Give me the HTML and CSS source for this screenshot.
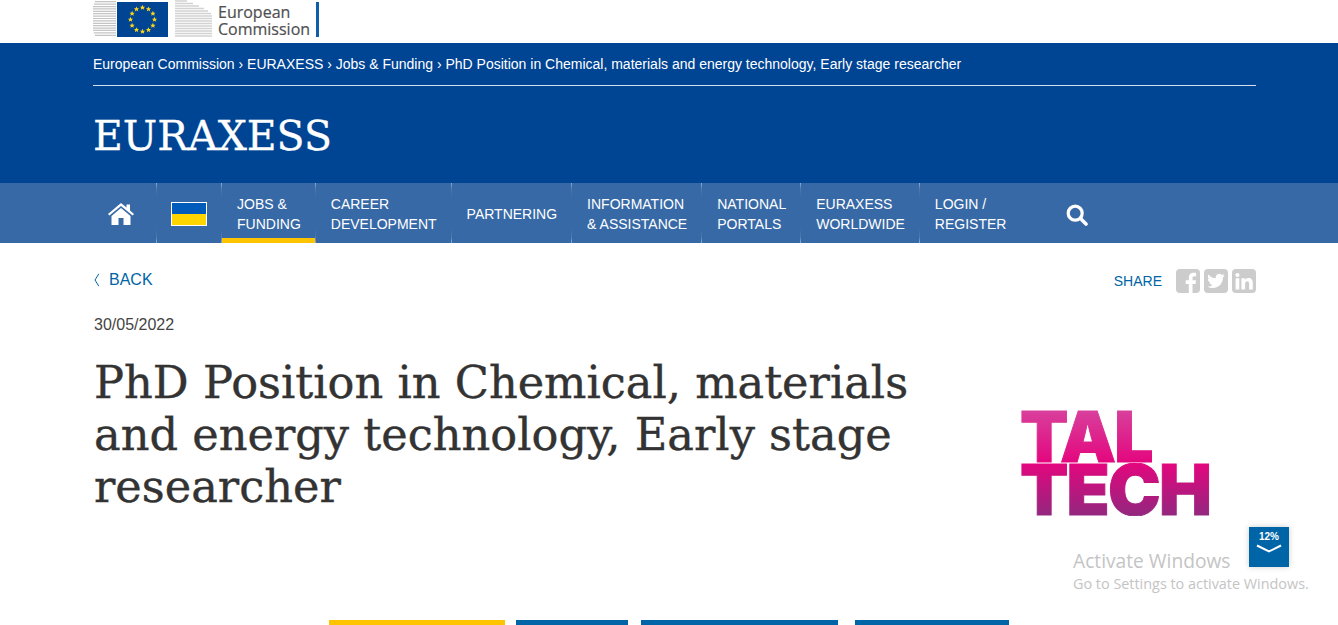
FILE: index.html
```html
<!DOCTYPE html>
<html lang="en">
<head>
<meta charset="utf-8">
<title>PhD Position in Chemical, materials and energy technology, Early stage researcher</title>
<link rel="stylesheet" href="styles.css">
</head>
<body>
<header class="top">
  <div class="wrap top-inner">
    <svg class="building building-left" viewBox="0 0 24 37" aria-hidden="true">
      <path fill="none" stroke="#c4c4c4" stroke-width="1.3" d="M2 1H24M1 3.5H24M0 6H24M0 8.5H24M0 11H24M0 13.5H24M0 16H24M0 18.5H24M0 21H24M0 23.5H24M0 26H24M0 28.5H24M0 31H24M1 33.5H24M2 36H24"/>
    </svg>
    <svg class="eu-flag" viewBox="0 0 53 37" aria-hidden="true">
      <defs><polygon id="star" fill="#ffd617" points="0,-2.7 .8,-.8 2.6,-.8 1.2,.4 1.7,2.3 0,1.2 -1.7,2.3 -1.2,.4 -2.6,-.8 -.8,-.8"/></defs>
      <rect x="1" y="2" width="51" height="35" fill="#004494"/>
      <use href="#star" x="26.5" y="7.5"/><use href="#star" x="32.5" y="9.1"/><use href="#star" x="36.9" y="13.5"/>
      <use href="#star" x="38.5" y="19.5"/><use href="#star" x="36.9" y="25.5"/><use href="#star" x="32.5" y="29.9"/>
      <use href="#star" x="26.5" y="31.5"/><use href="#star" x="20.5" y="29.9"/><use href="#star" x="16.1" y="25.5"/>
      <use href="#star" x="14.5" y="19.5"/><use href="#star" x="16.1" y="13.5"/><use href="#star" x="20.5" y="9.1"/>
    </svg>
    <svg class="building building-right" viewBox="0 0 37 37" aria-hidden="true">
      <path fill="none" stroke="#d2d2d2" stroke-width="1.3" d="M0 1H12M0 3.5H18M0 6H24M0 8.5H29M0 11H33M0 13.5H36M0 16H37M0 18.5H37M0 21H37M0 23.5H37M0 26H37M0 28.5H37M0 31H37M0 33.5H37M0 36H37"/>
    </svg>
    <div class="ec-name">European<br>Commission</div>
    <div class="ec-bar"></div>
  </div>
</header>

<section class="band">
  <div class="wrap">
    <nav class="crumbs">European Commission › EURAXESS › Jobs &amp; Funding › PhD Position in Chemical, materials and energy technology, Early stage researcher</nav>
    <div class="site-name">EURAXESS</div>
  </div>
</section>

<nav class="menu">
  <div class="wrap menu-inner">
    <a class="item item-home" href="#" aria-label="Home">
      <svg class="home" viewBox="0 0 26 22" aria-hidden="true"><path fill="#fff" d="M13 0 L18.5 4.6 V1.5 H22 V7.5 L26 10.9 L24.6 12.5 L13 2.9 L1.4 12.5 L0 10.9 Z M13 5 L22.5 12.9 V22 H15.5 V15 H10.5 V22 H3.5 V12.9 Z"/></svg>
    </a>
    <a class="item item-flag" href="#" aria-label="Ukraine"><span class="flag"><span class="flag-blue"></span><span class="flag-yellow"></span></span></a>
    <a class="item active" href="#">JOBS &amp;<br>FUNDING</a>
    <a class="item" href="#">CAREER<br>DEVELOPMENT</a>
    <a class="item" href="#">PARTNERING</a>
    <a class="item" href="#">INFORMATION<br>&amp; ASSISTANCE</a>
    <a class="item" href="#">NATIONAL<br>PORTALS</a>
    <a class="item" href="#">EURAXESS<br>WORLDWIDE</a>
    <a class="item" href="#">LOGIN /<br>REGISTER</a>
    <a class="search" href="#" aria-label="Search">
      <svg viewBox="0 0 22 22" aria-hidden="true"><circle cx="9.2" cy="9.2" r="7" fill="none" stroke="#fff" stroke-width="3.2"/><path d="M14.5 14.5 L20 20" stroke="#fff" stroke-width="3.6" stroke-linecap="round"/></svg>
    </a>
  </div>
</nav>

<main class="wrap content">
  <div class="tools">
    <a class="back" href="#"><svg class="chev" viewBox="0 0 6 14" aria-hidden="true"><path d="M4.8 .8 L1 7 L4.8 13.2" fill="none" stroke="#0065a6" stroke-width="1"/></svg>BACK</a>
    <div class="share">
      <span class="share-label">SHARE</span>
      <svg class="social" viewBox="0 0 24 24" aria-hidden="true"><rect width="24" height="24" rx="4" fill="#ccc"/><path fill="#fff" d="M16.5 24 V15 H19.6 L20 11.3 H16.5 V9 C16.5 8 16.9 7.3 18.3 7.3 H20.1 V4 C19.6 3.9 18.6 3.8 17.3 3.8 C14.6 3.8 12.8 5.4 12.8 8.5 V11.3 H9.7 V15 H12.8 V24 Z"/></svg>
      <svg class="social" viewBox="0 0 24 24" aria-hidden="true"><rect width="24" height="24" rx="4" fill="#ccc"/><path fill="#fff" transform="translate(3.2 3.2) scale(.73)" d="M23.953 4.57a10 10 0 01-2.825.775 4.958 4.958 0 002.163-2.723c-.951.555-2.005.959-3.127 1.184a4.92 4.92 0 00-8.384 4.482C7.69 8.095 4.067 6.13 1.64 3.162a4.822 4.822 0 00-.666 2.475c0 1.71.87 3.213 2.188 4.096a4.904 4.904 0 01-2.228-.616v.06a4.923 4.923 0 003.946 4.827 4.996 4.996 0 01-2.212.085 4.936 4.936 0 004.604 3.417 9.867 9.867 0 01-6.102 2.105c-.39 0-.779-.023-1.17-.067a13.995 13.995 0 007.557 2.209c9.053 0 13.998-7.496 13.998-13.985 0-.21 0-.42-.015-.63A9.935 9.935 0 0024 4.59z"/></svg>
      <svg class="social" viewBox="0 0 24 24" aria-hidden="true"><rect width="24" height="24" rx="4" fill="#ccc"/><path fill="#fff" d="M3.6 9.2 H7.3 V20.4 H3.6 Z M5.45 3.9 A2.1 2.1 0 1 1 5.45 8.1 A2.1 2.1 0 1 1 5.45 3.9 Z M9.4 9.2 H12.9 V10.8 C13.5 9.8 14.8 8.9 16.5 8.9 C19.8 8.9 20.8 11 20.8 14 V20.4 H17.1 V14.8 C17.1 13.3 16.7 12.2 15.3 12.2 C13.8 12.2 13.1 13.3 13.1 14.8 V20.4 H9.4 Z"/></svg>
    </div>
  </div>
  <div class="date">30/05/2022</div>
  <div class="title-row">
    <h1 class="title">PhD Position in Chemical, materials and energy technology, Early stage researcher</h1>
    <div class="logo"><span>TAL</span><span>TECH</span></div>
  </div>
  <div class="tabs">
    <a class="tab tab-1" href="#"></a>
    <a class="tab tab-2" href="#"></a>
    <a class="tab tab-3" href="#"></a>
    <a class="tab tab-4" href="#"></a>
  </div>
</main>

<div class="activate">
  <div class="activate-title">Activate Windows</div>
  <div class="activate-sub">Go to Settings to activate Windows.</div>
</div>
<div class="progress">
  <span class="progress-num">12%</span>
  <svg viewBox="0 0 26 10" aria-hidden="true"><path d="M1 1.5 L13 7.5 L25 1.5" fill="none" stroke="#fff" stroke-width="2"/></svg>
</div>
</body>
</html>
```
FILE: styles.css
```css
* { box-sizing: border-box; }
html, body { margin: 0; height: 625px; overflow: hidden; }
body { position: relative; background: #fff; color: #333; font-family: "Liberation Sans", Arial, sans-serif; }
a { color: inherit; text-decoration: none; }

.wrap { width: 1163px; margin-left: 93px; }

/* top bar */
.top { height: 43px; overflow: hidden; }
.top-inner { display: flex; align-items: flex-start; height: 43px; }
.building { display: block; height: 37px; flex-shrink: 0; }
.building-left { width: 23px; }
.building-right { width: 37px; margin-left: 6px; }
.eu-flag { width: 53px; height: 37px; display: block; flex-shrink: 0; }
.ec-name { margin-left: 6px; font-family: "Open Sans", sans-serif; font-size: 16px; line-height: 17px; color: #4f4f51; -webkit-text-stroke: .2px #4f4f51; padding-top: 4px; width: 98px; white-space: nowrap; }
.ec-bar { width: 3px; height: 35px; margin-top: 2px; background: #0e5ea8; }

/* blue band */
.band { height: 140px; background: #004494; color: #fff; }
.crumbs { height: 43px; padding-top: 13px; line-height: 16px; font-size: 14px; border-bottom: 1px solid #d5e0ee; white-space: nowrap; }
.site-name { margin-top: 23px; font-family: "DejaVu Serif", serif; font-size: 40.9px; line-height: 54px; -webkit-text-stroke: .3px #fff; }

/* menu */
.menu { height: 60px; background: #3769a6; color: #fff; }
.menu-inner { display: flex; height: 60px; }
.item { position: relative; display: flex; align-items: center; flex-shrink: 0; height: 60px; padding: 2px 15px 0; font-size: 14px; line-height: 20px; white-space: nowrap; }
.item + .item::before { content: ""; position: absolute; left: -1px; top: 0; bottom: 0; width: 1px; background: linear-gradient(180deg, #8fadd0 0, #4e7ab0 6px, #3769a6 14px, #3769a6 46px, #4e7ab0 54px, #8fadd0 60px); }
.item-home { width: 64px; padding: 2px 0 0 15px; }
.home { width: 26px; height: 22px; display: block; }
.item-flag { width: 65px; padding: 2px 14px 0; }
.flag { display: block; width: 36px; height: 24px; border: 1px solid #fff; }
.flag-blue, .flag-yellow { display: block; height: 11px; }
.flag-blue { background: #005bbb; }
.flag-yellow { background: #ffd500; }
.active::after { content: ""; position: absolute; left: 0; right: 0; bottom: 0; height: 5px; background: #ffc400; }
.search { display: flex; align-items: center; margin-left: 45px; padding-top: 4px; }
.search svg { width: 22px; height: 22px; display: block; }

/* content */
.content { height: 382px; display: flex; flex-direction: column; }
.tools { display: flex; justify-content: space-between; align-items: center; height: 24px; margin-top: 25px; }
.back { display: flex; align-items: center; font-size: 16px; color: #0065a6; padding-left: 1px; }
.chev { width: 6px; height: 14px; margin-right: 9px; }
.share { display: flex; align-items: center; gap: 4px; margin-top: 2px; }
.share-label { font-size: 14px; color: #0065a6; margin-right: 10px; }
.social { width: 24px; height: 24px; display: block; }
.date { margin-top: 23px; padding-left: 1px; font-size: 16px; line-height: 20px; color: #444; }
.title-row { display: flex; justify-content: space-between; margin-top: 22px; height: 160px; }
.title { margin: 0; width: 860px; padding-left: 1px; font-family: "DejaVu Serif", serif; font-weight: 400; font-size: 44.7px; line-height: 52px; color: #333; -webkit-text-stroke: .4px #333; }
.logo { display: flex; flex-direction: column; align-items: flex-start; width: 236px; padding-top: 53px; font-family: Inter, sans-serif; font-weight: 900; font-size: 70.5px; line-height: 53px; letter-spacing: -1.8px; -webkit-text-stroke: 1px transparent; }
.logo span { display: block; color: transparent; background: linear-gradient(180deg, #d8409c 0, #e4067e 50%, #92277e 100%); background-size: 100% 106px; -webkit-background-clip: text; background-clip: text; }
.logo span:last-child { background-position: 0 -53px; }

.tabs { display: flex; margin-top: 103px; padding-left: 236px; }
.tab { display: block; height: 5px; background: #0065a6; }
.tab-1 { width: 176px; background: #ffc400; }
.tab-2 { width: 112px; margin-left: 11px; }
.tab-3 { width: 197px; margin-left: 13px; }
.tab-4 { width: 154px; margin-left: 17px; }

/* overlays */
.activate { position: absolute; left: 1073px; top: 548px; color: #c4c4c4; font-family: "Open Sans", sans-serif; white-space: nowrap; }
.activate-title { font-size: 19.2px; line-height: 25px; }
.activate-sub { font-size: 14.4px; line-height: 21px; }
.progress { position: absolute; left: 1249px; top: 527px; width: 40px; height: 40px; background: #0065a6; color: #fff; box-shadow: 0 0 6px rgba(0,0,0,.2); display: flex; flex-direction: column; align-items: center; padding-top: 3px; }
.progress-num { font-size: 10px; line-height: 13px; font-weight: 700; }
.progress svg { width: 26px; height: 10px; display: block; margin-top: 1px; }
```
